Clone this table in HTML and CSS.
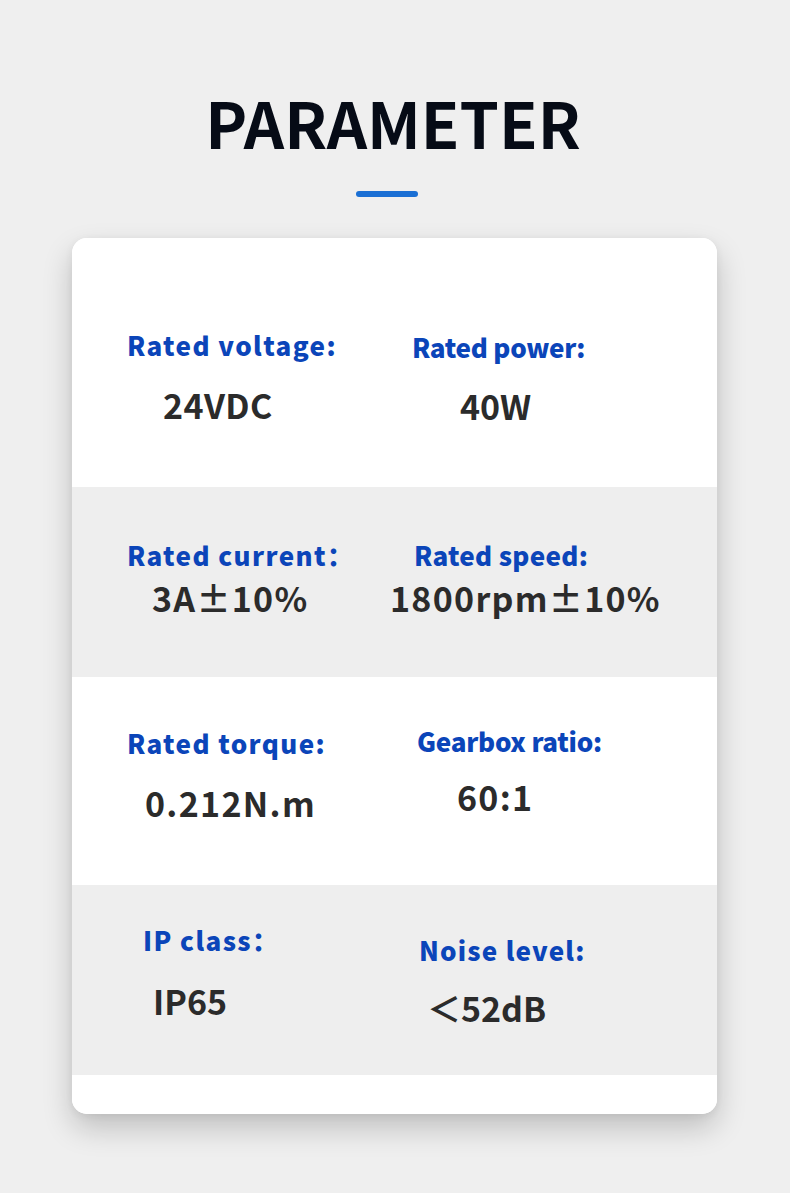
FILE: index.html
```html
<!DOCTYPE html>
<html lang="en">
<head>
<meta charset="utf-8">
<title>Parameter</title>
<link rel="stylesheet" href="styles.css">
</head>
<body>
<main class="page">
  <h1 class="title">PARAMETER</h1>
  <div class="title-bar"></div>
  <section class="card">
    <div class="row row-1 white">
      <div class="cell c1 l55 v91 p94 g30">
        <div class="label wide">Rated voltage:</div>
        <div class="value slight">24VDC</div>
      </div>
      <div class="cell c2 l30 v78 p96 g29">
        <div class="label tight">Rated power:</div>
        <div class="value">40W</div>
      </div>
    </div>
    <div class="row row-2 grey">
      <div class="cell c1 l55 v80 p55 g13">
        <div class="label wide">Rated current：</div>
        <div class="value wide">3A±10%</div>
      </div>
      <div class="cell c2 l32 v8 p55 g13">
        <div class="label mid">Rated speed:</div>
        <div class="value wide">1800rpm±10%</div>
      </div>
    </div>
    <div class="row row-3 white">
      <div class="cell c1 l55 v73 p53 g30">
        <div class="label wide">Rated torque:</div>
        <div class="value wide">0.212N.m</div>
      </div>
      <div class="cell c2 l35 v75 p51 g26">
        <div class="label tight">Gearbox ratio:</div>
        <div class="value wide">60:1</div>
      </div>
    </div>
    <div class="row row-4 grey">
      <div class="cell c1 l71 v81 p42 g31">
        <div class="label wide">IP class：</div>
        <div class="value">IP65</div>
      </div>
      <div class="cell c2 l37 v45 p52 g28">
        <div class="label noise">Noise level:</div>
        <div class="value">＜52dB</div>
      </div>
    </div>
    <div class="row row-5 white"></div>
  </section>
</main>
</body>
</html>
```

FILE: styles.css
```css
* { box-sizing: border-box; }
html, body {
  margin: 0;
  padding: 0;
  background: #efefef;
}
body {
  font-family: "Noto Sans CJK SC", "Noto Sans", sans-serif;
  width: 790px;
  height: 1193px;
  overflow: hidden;
}
.page {
  display: flex;
  flex-direction: column;
  align-items: center;
  padding-top: 90px;
}
.title {
  margin: 0 4px 0 0;
  font-size: 63px;
  line-height: 63px;
  font-weight: 700;
  color: #060b16;
  letter-spacing: 0;
}
.title-bar {
  width: 62px;
  height: 6px;
  border-radius: 3px;
  background: #1a6fd4;
  margin-top: 38px;
  margin-right: 16px;
}
.card {
  margin-top: 41px;
  margin-left: 72px;
  align-self: flex-start;
  width: 645px;
  background: #fff;
  border-radius: 15px;
  overflow: hidden;
  box-shadow: 0 14px 30px rgba(0, 0, 0, 0.2), 0 2px 8px rgba(0, 0, 0, 0.06);
  display: flex;
  flex-direction: column;
}
.row {
  display: grid;
  grid-template-columns: 310px 1fr;
}
.white { background: #ffffff; }
.grey { background: #eeeeee; }
.row-1 { height: 249px; }
.row-2 { height: 190px; }
.row-3 { height: 208px; }
.row-4 { height: 190px; }
.row-5 { height: 39px; }

.cell {
  display: flex;
  flex-direction: column;
  align-items: flex-start;
}
.label {
  font-size: 26px;
  line-height: 26px;
  font-weight: 900;
  color: #0b45b9;
  white-space: nowrap;
}
.label.wide { letter-spacing: 1.4px; }
.label.noise { letter-spacing: 1.2px; }
.label.mid { letter-spacing: 0.3px; }
.label.tight { letter-spacing: -0.25px; }
.value {
  font-size: 34px;
  line-height: 34px;
  font-weight: 700;
  color: #2b2b2b;
  white-space: nowrap;
}
.value.wide { letter-spacing: 1.3px; }
.value.slight { letter-spacing: 0.4px; }

/* label horizontal offsets */
.l30 .label { margin-left: 30px; }
.l32 .label { margin-left: 32px; }
.l35 .label { margin-left: 35px; }
.l37 .label { margin-left: 37px; }
.l55 .label { margin-left: 55px; }
.l71 .label { margin-left: 71px; }

/* value horizontal offsets */
.v8 .value { margin-left: 8px; }
.v45 .value { margin-left: 45px; }
.v73 .value { margin-left: 73px; }
.v75 .value { margin-left: 75px; }
.v78 .value { margin-left: 78px; }
.v80 .value { margin-left: 80px; }
.v81 .value { margin-left: 81px; }
.v91 .value { margin-left: 91px; }

/* vertical placement */
.p42 { padding-top: 42px; }
.p51 { padding-top: 51px; }
.p52 { padding-top: 52px; }
.p53 { padding-top: 53px; }
.p55 { padding-top: 55px; }
.p94 { padding-top: 94px; }
.p96 { padding-top: 96px; }
.g13 { gap: 13px; }
.g26 { gap: 26px; }
.g28 { gap: 28px; }
.g29 { gap: 29px; }
.g30 { gap: 30px; }
.g31 { gap: 31px; }
```
